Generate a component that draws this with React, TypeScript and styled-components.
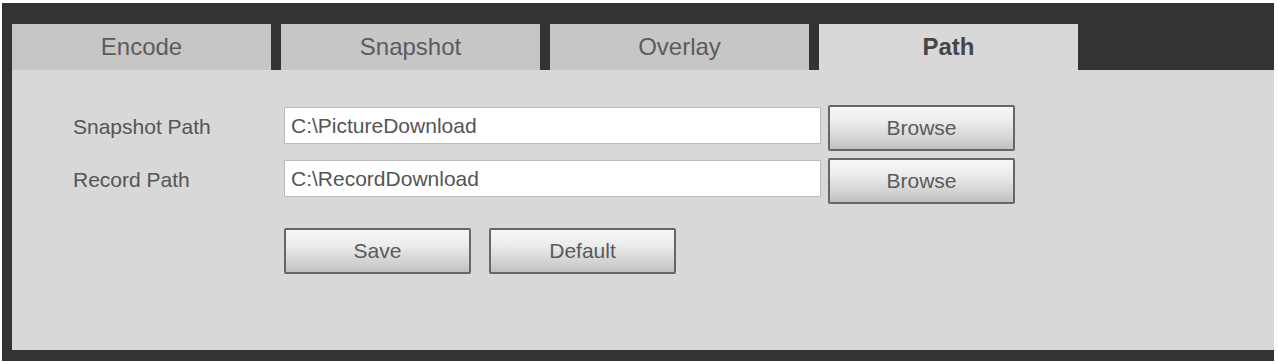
import styled, { createGlobalStyle } from "styled-components";

const GlobalStyle = createGlobalStyle`
  html, body {
    margin: 0;
    padding: 0;
    background: #ffffff;
    font-family: "Liberation Sans", Arial, sans-serif;
  }
`;

const Frame = styled.div`
  width: 1272px;
  margin: 3px 0 0 2px;
  padding: 21px 0 11px 10px;
  box-sizing: border-box;
  background-color: #333333;
`;

const TabBar = styled.div`
  display: flex;
  gap: 10px;
  height: 46px;
`;

const Tab = styled.div<{ $active?: boolean }>`
  width: 259px;
  height: 46px;
  display: flex;
  align-items: center;
  justify-content: center;
  font-size: 24px;
  font-weight: ${(p) => (p.$active ? 700 : 400)};
  color: ${(p) => (p.$active ? "#464646" : "#5c5c5c")};
  background-color: ${(p) => (p.$active ? "#d8d8d8" : "#c6c6c6")};
  cursor: pointer;
`;

const Panel = styled.div`
  height: 280px;
  box-sizing: border-box;
  background-color: #d8d8d8;
  padding: 35px 0 0 61px;
  display: flex;
  flex-direction: column;
  gap: 7px;
`;

const Row = styled.div`
  display: flex;
  align-items: flex-start;
  height: 46px;
`;

const Label = styled.div`
  width: 211px;
  margin-top: 10px;
  font-size: 21px;
  color: #555555;
`;

const PathInput = styled.input`
  width: 537px;
  height: 37px;
  box-sizing: border-box;
  margin: 2px 7px 0 0;
  padding: 0 6px;
  border: 1px solid #bcbcbc;
  background: #ffffff;
  font-family: "Liberation Sans", Arial, sans-serif;
  font-size: 21px;
  color: #555555;
  outline: none;
`;

const Button = styled.button`
  width: 187px;
  height: 46px;
  box-sizing: border-box;
  border: 2px solid #666666;
  border-radius: 2px;
  background: linear-gradient(#f7f7f7 0%, #ececec 35%, #d0d0d0 80%, #c0c0c0 100%);
  font-family: "Liberation Sans", Arial, sans-serif;
  font-size: 21px;
  color: #5a5a5a;
  padding: 0;
  cursor: pointer;
`;

const ActionRow = styled.div`
  display: flex;
  gap: 18px;
  margin: 17px 0 0 211px;
`;

export default function App() {
  return (
    <>
      <GlobalStyle />
      <Frame>
        <TabBar>
          <Tab>Encode</Tab>
          <Tab>Snapshot</Tab>
          <Tab>Overlay</Tab>
          <Tab $active>Path</Tab>
        </TabBar>
        <Panel>
          <Row>
            <Label>Snapshot Path</Label>
            <PathInput defaultValue="C:\PictureDownload" />
            <Button>Browse</Button>
          </Row>
          <Row>
            <Label>Record Path</Label>
            <PathInput defaultValue="C:\RecordDownload" />
            <Button>Browse</Button>
          </Row>
          <ActionRow>
            <Button>Save</Button>
            <Button>Default</Button>
          </ActionRow>
        </Panel>
      </Frame>
    </>
  );
}
